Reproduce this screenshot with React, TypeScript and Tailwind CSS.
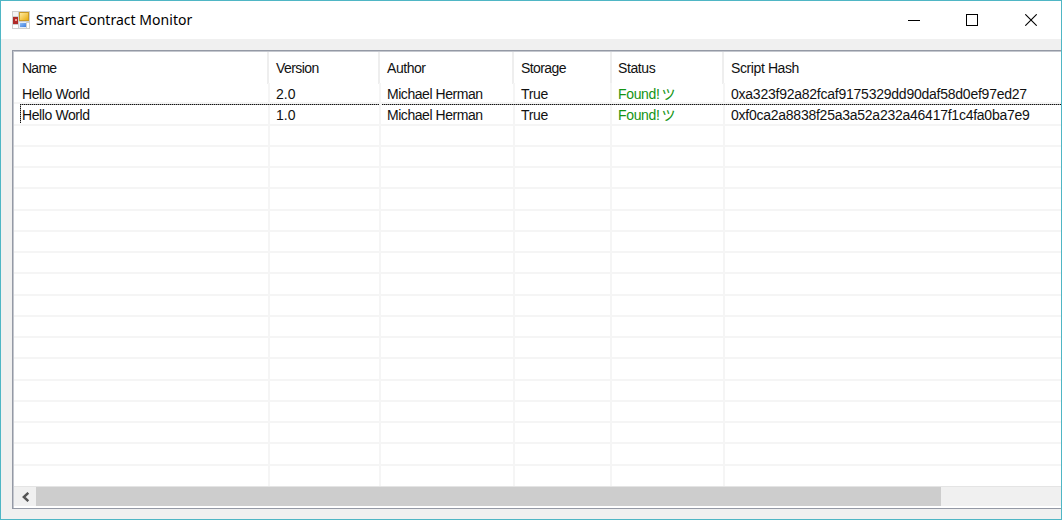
const rows = [
  { version: "2.0", hash: "0xa323f92a82fcaf9175329dd90daf58d0ef97ed27", hashSpacing: "tracking-[-0.24px]" },
  { version: "1.0", hash: "0xf0ca2a8838f25a3a52a232a46417f1c4fa0ba7e9", hashSpacing: "tracking-[-0.25px]" },
];

const headColumns = "grid grid-cols-[255px_111px_134px_98px_112px_1fr]";
const bodyColumns = "grid grid-cols-[256px_111px_134px_97px_113px_1fr]";
const emptyRows = Array.from({ length: 16 }, (_, i) => i);

function AppIcon() {
  return (
    <svg className="h-[18px] w-[18px]" viewBox="0 0 18 18" shapeRendering="crispEdges">
      <defs>
        <linearGradient id="gold" x1="0" y1="0" x2="1" y2="1">
          <stop offset="0" stopColor="#ffeaa0" />
          <stop offset="1" stopColor="#e9ae14" />
        </linearGradient>
        <linearGradient id="blue" x1="0" y1="0" x2="1" y2="1">
          <stop offset="0" stopColor="#90bdf6" />
          <stop offset="1" stopColor="#3f7fe0" />
        </linearGradient>
      </defs>
      <rect width="18" height="18" fill="#cfcfcf" />
      <rect x="1" y="1" width="5" height="4" fill="#f4f4f4" />
      <rect x="1" y="14" width="5" height="3" fill="#fff" />
      <rect x="15" y="12" width="2" height="5" fill="#fff" />
      <rect x="1" y="6" width="5" height="7" fill="#b02a28" />
      <rect x="3" y="8" width="2" height="2" fill="#f0a098" />
      <rect x="7" y="1" width="10" height="9" fill="#c99a28" />
      <rect x="8" y="2" width="8" height="7" fill="url(#gold)" />
      <rect x="7" y="11" width="7" height="6" fill="#e4edf8" />
      <rect x="8" y="12" width="6" height="4" fill="url(#blue)" />
    </svg>
  );
}

function TitleBar() {
  return (
    <header className="flex h-[38px] shrink-0 items-center bg-white pl-[11px] pr-[24px]">
      <AppIcon />
      <h1 className="-mt-[2px] ml-[6px] grow whitespace-nowrap font-['Noto_Sans',sans-serif] text-[14px] tracking-[0.03px] text-black">
        Smart Contract Monitor
      </h1>
      <div className="flex items-center">
        <svg className="mr-[46px] h-3 w-3" viewBox="0 0 12 12" shapeRendering="crispEdges">
          <path d="M0 6.5h12" stroke="#000" />
        </svg>
        <svg className="mr-[47px] h-3 w-3" viewBox="0 0 12 12" shapeRendering="crispEdges">
          <path d="M.5 .5h11v11h-11z" fill="none" stroke="#000" />
        </svg>
        <svg className="h-3 w-3" viewBox="0 0 12 12">
          <path d="M.3 .3l11.4 11.4M11.7 .3L.3 11.7" stroke="#000" strokeWidth="1.1" />
        </svg>
      </div>
    </header>
  );
}

const cell = "border-r-2 border-[#f5f5f5]";
const headCell = "border-r-2 border-[#eeeeee]";

export default function App() {
  return (
    <div className="flex h-[520px] w-[1062px] flex-col overflow-hidden border border-[#4fb6c5] bg-[#f0f0f0] font-['Liberation_Sans','Noto_Sans_CJK_JP',sans-serif] text-[14px] text-[#111]">
      <TitleBar />
      <main className="ml-[11px] mt-[11px] flex h-[459px] flex-col border-y border-l border-[#9499a5] bg-white whitespace-nowrap">
        <div className="flex grow flex-col border-l border-t border-[#c4c7ce]">
          <div className={`${headColumns} h-[31px] shrink-0 leading-[32px]`}>
            <div className={`${headCell} pl-[8px] tracking-[-0.75px]`}>Name</div>
            <div className={`${headCell} pl-[7px] tracking-[-0.55px]`}>Version</div>
            <div className={`${headCell} pl-[7px] tracking-[-0.45px]`}>Author</div>
            <div className={`${headCell} pl-[7px] tracking-[-0.6px]`}>Storage</div>
            <div className={`${headCell} pl-[6px] tracking-[-0.4px]`}>Status</div>
            <div className="pl-[7px] tracking-[-0.4px]">Script Hash</div>
          </div>
          <div className="relative h-[403px] shrink-0 overflow-hidden">
            {rows.map((r) => (
              <div key={r.version} className={`${bodyColumns} h-[21.25px] border-b-2 border-[#f5f5f5] leading-[22px]`}>
                <div className={`${cell} pl-[8px] tracking-[-0.4px]`}>Hello World</div>
                <div className={`${cell} pl-[6px]`}>{r.version}</div>
                <div className={`${cell} pl-[6px] tracking-[-0.45px]`}>Michael Herman</div>
                <div className={`${cell} pl-[6px] tracking-[-0.3px]`}>True</div>
                <div className={`${cell} flex pl-[6px] text-[#149414]`}>
                  <span className="tracking-[-0.35px]">Found!</span>
                  <span className="ml-[2px] text-[14px]">ツ</span>
                </div>
                <div className={`pl-[6px] ${r.hashSpacing}`}>{r.hash}</div>
              </div>
            ))}
            {emptyRows.map((i) => (
              <div key={i} className={`${bodyColumns} h-[21.25px] border-b-2 border-[#f5f5f5]`}>
                <div className={cell} />
                <div className={cell} />
                <div className={cell} />
                <div className={cell} />
                <div className={cell} />
              </div>
            ))}
            <div className={`${bodyColumns} h-[22px]`}>
              <div className={cell} />
              <div className={cell} />
              <div className={cell} />
              <div className={cell} />
              <div className={cell} />
            </div>
            <div className="absolute left-[6px] right-0 top-[21px] h-px bg-[repeating-linear-gradient(90deg,#111_0_1px,#999_1px_2px)]" />
            <div className="absolute left-[365px] top-[21px] h-px w-[3px] bg-[#f5f5f5]" />
            <div className="absolute left-[6px] top-[21px] h-[19px] w-px bg-[repeating-linear-gradient(180deg,#111_0_1px,#999_1px_2px)]" />
          </div>
          <div className="flex h-[20px] shrink-0 border-t border-[#e4e4e4] bg-[#f0f0f0]">
            <div className="flex w-[22px] items-center justify-center">
              <svg className="h-[10px] w-[9px]" viewBox="0 0 9 10">
                <path d="M7.3 .8L2.8 5l4.5 4.2" fill="none" stroke="#555" strokeWidth="2.4" />
              </svg>
            </div>
            <div className="w-[905px] bg-[#cdcdcd]" />
          </div>
        </div>
      </main>
    </div>
  );
}
